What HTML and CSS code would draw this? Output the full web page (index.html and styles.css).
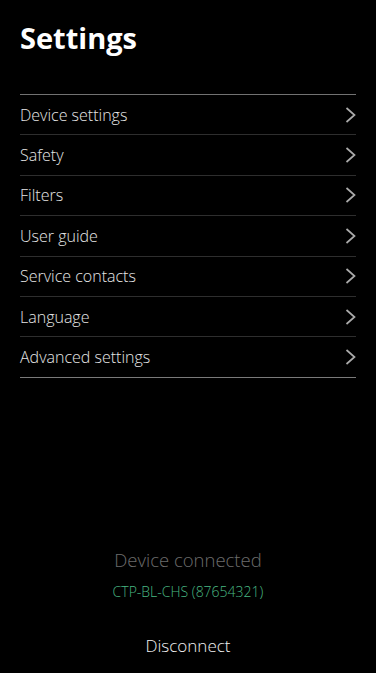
FILE: index.html
```html
<!DOCTYPE html>
<html>
<head>
    <title>Settings</title>
    <link rel="stylesheet" href="styles.css">
</head>
<body>
    <div class="screen">
        <h1 class="title">Settings</h1>
        <ul class="menu">
            <li class="menu-item"><span>Device settings</span><svg class="chevron" viewBox="0 0 12 16"><path d="M2.5 1 L10.5 8 L2.5 15"/></svg></li>
            <li class="menu-item"><span>Safety</span><svg class="chevron" viewBox="0 0 12 16"><path d="M2.5 1 L10.5 8 L2.5 15"/></svg></li>
            <li class="menu-item"><span>Filters</span><svg class="chevron" viewBox="0 0 12 16"><path d="M2.5 1 L10.5 8 L2.5 15"/></svg></li>
            <li class="menu-item"><span>User guide</span><svg class="chevron" viewBox="0 0 12 16"><path d="M2.5 1 L10.5 8 L2.5 15"/></svg></li>
            <li class="menu-item"><span>Service contacts</span><svg class="chevron" viewBox="0 0 12 16"><path d="M2.5 1 L10.5 8 L2.5 15"/></svg></li>
            <li class="menu-item"><span>Language</span><svg class="chevron" viewBox="0 0 12 16"><path d="M2.5 1 L10.5 8 L2.5 15"/></svg></li>
            <li class="menu-item"><span>Advanced settings</span><svg class="chevron" viewBox="0 0 12 16"><path d="M2.5 1 L10.5 8 L2.5 15"/></svg></li>
        </ul>
        <div class="status">
            <div class="status-label">Device connected</div>
            <div class="status-device">CTP-BL-CHS (87654321)</div>
            <button class="disconnect">Disconnect</button>
        </div>
    </div>
</body>
</html>
```

FILE: styles.css
```css
html, body {
    margin: 0;
    height: 100%;
    background-color: #000;
}

body {
    font-family: "Open Sans", Lato, sans-serif;
    font-weight: 300;
    color: #e6e6e6;
}

.screen {
    display: flex;
    flex-direction: column;
    height: 100%;
    padding: 0 20px;
    box-sizing: border-box;
}

.title {
    font-size: 29px;
    font-weight: 700;
    color: #fff;
    margin: 19px 0 0;
    line-height: 38px;
}

.menu {
    list-style: none;
    margin: 37px 0 0;
    padding: 0;
    border-top: 1px solid #727272;
    border-bottom: 1px solid #7a7a7a;
}

.menu-item {
    display: flex;
    justify-content: space-between;
    align-items: center;
    height: 39.4px;
    font-size: 16px;
    border-top: 1px solid #2e2e2e;
}

.menu-item:first-child {
    border-top: none;
}

.chevron {
    width: 12px;
    height: 16px;
    fill: none;
    stroke: #ababab;
    stroke-width: 1.7;
}

.status {
    margin-top: auto;
    padding-bottom: 16px;
    text-align: center;
}

.status-label {
    font-size: 18.5px;
    color: #6c6c6c;
}

.status-device {
    font-size: 14px;
    color: #48b883;
    margin-top: 10px;
}

.disconnect {
    background: none;
    border: none;
    font-family: inherit;
    font-weight: 300;
    font-size: 17px;
    color: #f2f2f2;
    margin-top: 33px;
    padding: 0;
}
```
